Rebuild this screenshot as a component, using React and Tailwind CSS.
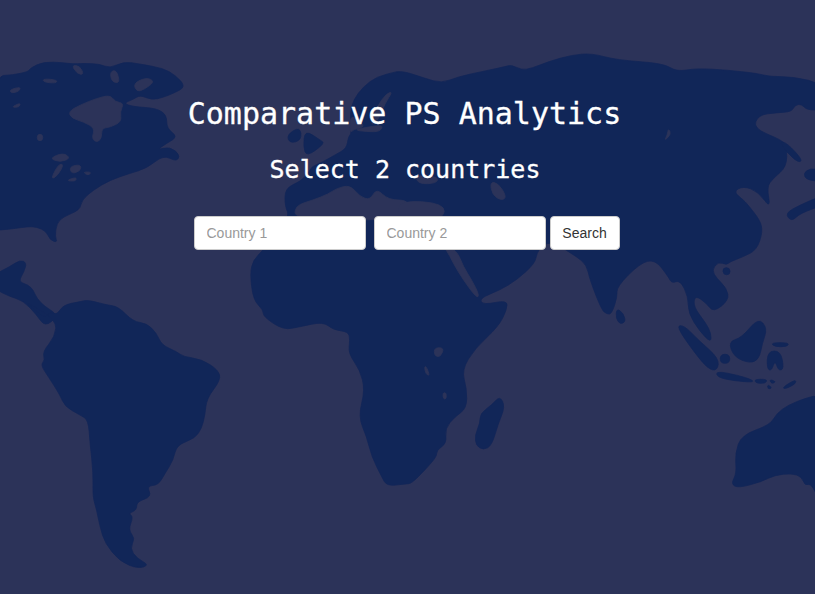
import { useState } from 'react';

const LAND = '#112658';
const SEA = '#2c3359';

// crop frames the map was traced in: page offset, 3x scale
const F2 = [0, 40];
const F3 = [405, 40];
const F4 = [0, 300];
const F5 = [405, 300];
const F6 = [270, 70];
const F7 = [610, 60];
const F8 = [610, 200];
const F9 = [420, 230];

const seg = ([ox, oy], str) =>
  str
    .trim()
    .split(/\s+/)
    .map((p) => {
      const [x, y] = p.split(',').map(Number);
      return [ox + x / 3, oy + y / 3];
    });

// rounds the traced corners so coasts read as soft shapes
const smooth = (pts) => {
  const mid = (a, b) => [(a[0] + b[0]) / 2, (a[1] + b[1]) / 2];
  const fmt = (p) => `${p[0].toFixed(1)} ${p[1].toFixed(1)}`;
  let d = `M${fmt(mid(pts[pts.length - 1], pts[0]))}`;
  pts.forEach((p, i) => {
    d += `Q${fmt(p)} ${fmt(mid(p, pts[(i + 1) % pts.length]))}`;
  });
  return `${d}Z`;
};

const landShapes = [
  // north america
  seg(F2, `-20,108 40,105 85,95 90,85 130,65 190,68 215,72 250,70 300,72 330,85 370,65 420,72 490,85 525,105 558,140 520,160 490,172 455,180 420,165 400,178 370,190 400,200 470,205 500,225 500,265 533,290 500,310 470,330 510,320 540,345 530,365 490,345 440,385 390,400 330,420 280,450 245,480 240,510 190,530 170,550 165,590 172,607 150,600 140,575 110,560 80,560 50,565 0,570 -20,570`),
  // mexico + central america
  seg(F2, `-20,705 30,680 60,660 80,668 72,695 55,725 85,735 100,750 110,775 135,800 160,815 172,830 135,860 110,825 70,782 30,770 -20,745`),
  // south america
  seg(F4, `70,0 100,25 135,55 150,35 170,45 190,15 240,5 265,0 320,15 355,20 400,65 440,70 470,100 485,135 530,155 550,170 605,178 655,210 662,240 620,295 615,345 605,385 585,415 530,435 520,480 495,520 475,555 440,558 455,590 410,605 410,630 385,640 400,650 385,690 405,715 390,745 410,775 448,795 415,806 360,785 315,730 300,680 290,630 278,590 280,520 270,430 265,360 240,345 195,320 180,285 145,230 122,195 135,180 128,155 165,110 170,60`),
  // eurasia + africa
  [
    ...seg(F3, `0,95 60,115 110,130 160,110 230,95 300,80 320,75 350,90 380,85 430,65 500,45 560,40`),
    ...seg(F7, `20,0 160,10 200,35 260,25 350,30 440,40 480,50 550,50 640,72 640,150 590,150 575,132 555,135 545,155 500,158 445,165 430,205 515,240 530,260 530,320 490,355 470,380 482,447 445,395 400,378 370,395 400,420 410,430`),
    ...seg(F8, `450,60 458,95 440,150 400,170 360,185 350,195 325,185 305,210 320,235 350,265 357,300 310,337 290,310 255,285 250,320 288,370 303,400 303,428 270,395 235,340 235,290 210,240 185,250 175,230 135,178 90,190 20,260 22,290 5,342 -10,342`),
    ...seg(F9, `545,240 510,150 500,105 470,80 440,62 410,40 370,40 350,70 345,100 290,150 240,180 178,205 190,225 262,210`),
    ...seg(F5, `305,30 280,80 210,145 170,210 185,265 185,325 150,350 120,385 125,430 95,450 95,470 60,510 20,550 0,552`),
    ...seg(F4, `1160,558 1145,530 1115,470 1100,410 1075,350 1095,270 1080,210 1045,160 1050,120 1045,95 1000,90 970,65 900,80 850,90 790,50 790,30 760,0`),
    ...seg(F2, `750,700 760,660 790,630 870,530 855,500`),
    ...seg(F6, `45,355 90,335 115,310 125,290 150,280 195,255 230,235 235,200 245,190 240,130 250,90 280,50 320,20 380,5`),
    ...seg(F2, `1190,95`),
  ],
];

const holes = [
  // hudson bay and arctic channels
  seg(F2, `205,215 240,195 290,175 330,165 345,185 372,190 360,215 365,245 330,262 305,265 305,295 290,308 275,295 285,265 250,245 215,235`),
  seg(F2, `330,95 350,90 360,130 335,125`),
  seg(F2, `400,130 440,112 465,125 430,150 410,155`),
  seg(F2, `130,116 172,120 168,130 130,126`),
  seg(F2, `215,75 240,78 252,105 230,100`),
  seg(F2, `112,283 128,283 128,302 112,302`),
  seg(F2, `28,150 62,140 58,154 35,160`),
  seg(F2, `33,202 62,188 58,202`),
  // great lakes
  seg(F2, `148,355 190,338 212,355 180,367`),
  seg(F2, `152,418 175,373 192,373 172,408`),
  seg(F2, `208,380 242,373 242,392 215,402`),
  seg(F2, `248,396 275,396 265,407`),
  seg(F2, `197,422 230,411 227,424`),
  // europe seas
  seg(F6, `300,170 320,110 350,70 368,65 345,100 325,150`),
  seg(F6, `250,180 300,170 340,165 330,185 290,185`),
  seg(F6, `240,130 290,170 250,178 240,190`),
  seg(F2, `885,497 940,480 985,462 1010,445 1050,435 1080,470 1110,480 1130,445 1165,480 1230,480 1230,540 885,540`),
  seg(F3, `-20,480 120,490 115,540 -20,540`),
  seg(F3, `30,405 100,410 95,430 40,432`),
  seg(F3, `255,425 280,430 305,470 290,482 262,465`),
  // red sea
  seg(F9, `60,40 110,60 130,110 155,150 178,195 170,204 130,150 100,100 80,60`),
  // african lakes
  seg(F5, `88,143 118,143 106,172 88,167`),
  seg(F5, `58,198 66,203 74,228 62,222`),
  seg(F5, `113,278 124,278 124,297 115,297`),
  // siberian lake
  seg(F7, `175,205 184,222 163,243 172,225`),
];

const islands = [
  // uk
  seg(F6, `50,195 90,170 95,210 60,220`),
  seg(F6, `105,180 150,210 165,220 110,260 100,230`),
  // sakhalin, japan
  seg(F7, `508,243 532,250 578,300 565,308 528,275`),
  seg(F7, `580,340 600,325 640,330 640,365 590,360`),
  seg(F8, `525,40 570,15 640,-15 640,15 570,40 545,65`),
  // hainan, ceylon
  seg(F8, `338,203 360,203 360,224 340,224`),
  seg(F5, `635,25 655,40 662,65 645,73 633,55`),
  // madagascar
  seg(F5, `285,288 300,320 280,370 260,437 235,450 213,437 210,405 225,370 226,340 260,315`),
  // indonesia
  seg(F5, `813,78 837,76 880,120 942,175 937,212 910,207 870,160`),
  seg(F5, `1060,53 1087,85 1072,130 1062,177 1035,190 988,172 970,125 1010,113`),
  seg(F5, `933,213 1000,226 1043,240 1043,247 985,242 938,232`),
  seg(F5, `946,163 974,163 974,190 946,190`),
  seg(F5, `1048,238 1087,238 1082,250 1053,250`),
  seg(F5, `1093,238 1114,245 1100,252`),
  seg(F5, `1088,253 1102,265 1088,267`),
  seg(F5, `1133,262 1172,238 1172,252 1140,267`),
  seg(F5, `1098,128 1152,128 1147,140 1108,140`),
  seg(F5, `1088,153 1127,153 1137,207 1120,212 1110,180 1100,212 1086,207`),
  // australia
  seg(F5, `1250,283 1200,295 1150,315 1115,340 1095,375 1010,405 990,460 995,520 978,552 1000,564 1070,545 1110,525 1160,520 1190,530 1200,557 1220,550 1250,620`),
];

const WorldMap = () => (
  <svg viewBox="0 0 815 594" className="absolute inset-0 w-full h-full blur-[0.5px]">
    <g strokeLinejoin="round" strokeWidth="0.8">
      {landShapes.map((pts, i) => (
        <path key={i} d={smooth(pts)} fill={LAND} stroke={LAND} />
      ))}
      {holes.map((pts, i) => (
        <path key={i} d={smooth(pts)} fill={SEA} stroke={SEA} />
      ))}
      {islands.map((pts, i) => (
        <path key={i} d={smooth(pts)} fill={LAND} stroke={LAND} />
      ))}
    </g>
  </svg>
);

const CountryInput = ({ placeholder, value, onChange }) => (
  <input
    type="text"
    value={value}
    onChange={(e) => onChange(e.target.value)}
    placeholder={placeholder}
    className="w-[172px] h-[34px] px-3 bg-white border border-[#ccc] rounded text-sm text-[#555] placeholder:text-[#999] font-['Liberation_Sans',Arial,sans-serif]"
  />
);

const App = () => {
  const [first, setFirst] = useState('');
  const [second, setSecond] = useState('');

  return (
    <div className="relative w-full h-[594px] overflow-hidden bg-[#2c3359]">
      <WorldMap />
      <div className="relative flex flex-col items-center pt-[94px] text-white font-['DejaVu_Sans_Mono',monospace] [-webkit-text-stroke:0.3px_white]">
        <h1 className="h-[40px] text-[30px] leading-[40px] -ml-[6px]">Comparative PS Analytics</h1>
        <h2 className="mt-[20px] h-[32px] text-[25px] leading-[32px] -ml-[5px]">Select 2 countries</h2>
        <div className="mt-[30px] -ml-[2px] flex items-center [-webkit-text-stroke:0]">
          <CountryInput placeholder="Country 1" value={first} onChange={setFirst} />
          <div className="ml-2">
            <CountryInput placeholder="Country 2" value={second} onChange={setSecond} />
          </div>
          <button className="ml-1 w-[70px] h-[34px] bg-white border border-[#ccc] rounded text-sm text-[#333] font-['Liberation_Sans',Arial,sans-serif]">
            Search
          </button>
        </div>
      </div>
    </div>
  );
};

export default App;
